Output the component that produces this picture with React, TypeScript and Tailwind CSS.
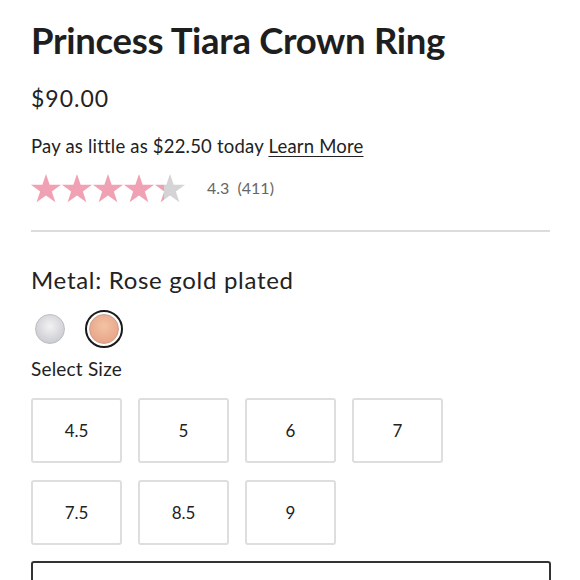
import React from "react";

const sizes = ["4.5", "5", "6", "7", "7.5", "8.5", "9"];
const stars = [1, 1, 1, 1, 0.3];

function Star({ fill }: { fill: number }) {
  const id = `half-${fill}`;
  return (
    <svg width="32" height="32" viewBox="0 0 24 24">
      <defs>
        <linearGradient id={id}>
          <stop offset={`${fill * 100}%`} stopColor="#f1a1b4" />
          <stop offset={`${fill * 100}%`} stopColor="#d4d4d6" />
        </linearGradient>
      </defs>
      <path
        d="M12 1.5l2.75 8.1h8.55l-6.9 5 2.65 8.1L12 17.7l-7.05 5 2.65-8.1-6.9-5h8.55z"
        fill={`url(#${id})`}
      />
    </svg>
  );
}

export default function App() {
  return (
    <div className="min-h-[580px] bg-white px-[31px] pt-[18px] text-[#222] font-['Lato','Liberation_Sans',sans-serif]">
      <h1 className="text-[36.5px] font-bold leading-[44px] tracking-[-0.3px] text-[#1e1e1e]">
        Princess Tiara Crown Ring
      </h1>
      <div className="mt-[22px] text-[23px] leading-[28px] tracking-[1px]">$90.00</div>
      <div className="mt-[22px] text-[18.5px] leading-[24px] tracking-[0.2px]">
        Pay as little as $22.50 today{" "}
        <span className="underline underline-offset-[3px]">Learn More</span>
      </div>
      <div className="mt-[14px] flex items-center">
        <div className="flex">
          {stars.map((f, i) => (
            <div key={i} className="-ml-[1px]">
              <Star fill={f} />
            </div>
          ))}
        </div>
        <span className="ml-[21px] text-[16px] text-[#666]">4.3&nbsp;&nbsp;(411)</span>
      </div>
      <div className="mt-[26px] h-[2px] w-[519px] bg-[#dcdcdc]" />
      <div className="mt-[34px] text-[24px] leading-[28px] tracking-[0.7px]">Metal: Rose gold plated</div>
      <div className="mt-[16px] flex items-center gap-[16px]">
        <div className="flex h-[38px] w-[38px] items-center justify-center">
          <div className="h-[30px] w-[30px] rounded-full border border-[#bdbdc2] bg-[radial-gradient(circle_at_50%_40%,#f2f2f4,#cfd0d4_70%,#b9bac0)]" />
        </div>
        <div className="flex h-[38px] w-[38px] items-center justify-center rounded-full border-2 border-[#1a1a1a]">
          <div className="h-[30px] w-[30px] rounded-full border border-[#c9a08e] bg-[radial-gradient(circle_at_50%_40%,#f4c3a6,#e9a78a_70%,#d89478)]" />
        </div>
      </div>
      <div className="mt-[10px] text-[19px] leading-[22px] tracking-[0.2px]">Select Size</div>
      <div className="mt-[18px] grid w-[412px] grid-cols-4 gap-x-[16px] gap-y-[17px]">
        {sizes.map((s) => (
          <div
            key={s}
            className="flex h-[65px] items-center justify-center rounded-[3px] border-2 border-[#dedede] text-[17px]"
          >
            {s}
          </div>
        ))}
      </div>
      <div className="mt-[16px] h-[60px] w-[520px] rounded-[3px] border-2 border-[#333]" />
    </div>
  );
}
